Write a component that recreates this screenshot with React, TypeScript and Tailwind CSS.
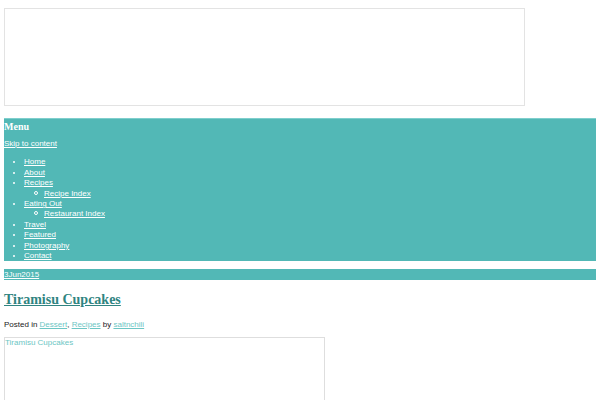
const teal = 'bg-[#52b8b6]';

const menu: { label: string; sub?: string[] }[] = [
  { label: 'Home' },
  { label: 'About' },
  { label: 'Recipes', sub: ['Recipe Index'] },
  { label: 'Eating Out', sub: ['Restaurant Index'] },
  { label: 'Travel' },
  { label: 'Featured' },
  { label: 'Photography' },
  { label: 'Contact' },
];

function App() {
  return (
    <div className="min-h-[400px] bg-white px-[4px] pt-[8px] font-['Liberation_Sans',Arial,sans-serif] text-[8px] leading-[10.4px] text-[#222]">
      {/* header image placeholder */}
      <div className="h-[98px] w-[521px] border border-[#e3e3e3]" />

      <nav className={`mt-[12px] h-[143px] w-[592px] border-t border-[#7fcfcd] ${teal} text-white`}>
        <h2 className="pt-[1px] font-['Liberation_Serif',serif] text-[10px] leading-[13px] font-bold">
          Menu
        </h2>
        <a href="#" className="mt-[6px] block underline">
          Skip to content
        </a>
        <ul className="mt-[8px] list-disc pl-[20px]">
          {menu.map((item) => (
            <li key={item.label}>
              <a href="#" className="underline">
                {item.label}
              </a>
              {item.sub && (
                <ul className="list-none pl-[20px]">
                  {item.sub.map((s) => (
                    <li key={s}>
                      {/* hollow circle bullet */}
                      <span className="-ml-[10px] mr-[6px] inline-block h-[4px] w-[4px] rounded-full border border-white align-[1px]" />
                      <a href="#" className="underline">
                        {s}
                      </a>
                    </li>
                  ))}
                </ul>
              )}
            </li>
          ))}
        </ul>
      </nav>

      <div className={`mt-[8px] h-[11px] w-[592px] ${teal} leading-[11px] text-white`}>
        <a href="#" className="underline">
          3Jun2015
        </a>
      </div>

      <h1 className="mt-[11px] font-['Liberation_Serif',serif] text-[14px] leading-[18px] font-bold text-[#2f8481]">
        <a href="#" className="underline">
          Tiramisu Cupcakes
        </a>
      </h1>

      <p className="mt-[11px]">
        Posted in{' '}
        <a href="#" className="text-[#6cc6c4] underline">
          Dessert
        </a>
        ,{' '}
        <a href="#" className="text-[#6cc6c4] underline">
          Recipes
        </a>{' '}
        by{' '}
        <a href="#" className="text-[#6cc6c4] underline">
          saltnchili
        </a>
      </p>

      <div className="mt-[7px] h-[80px] w-[321px] border border-[#dedede] text-[#6cc6c4]">
        Tiramisu Cupcakes
      </div>
    </div>
  );
}

export default App;
